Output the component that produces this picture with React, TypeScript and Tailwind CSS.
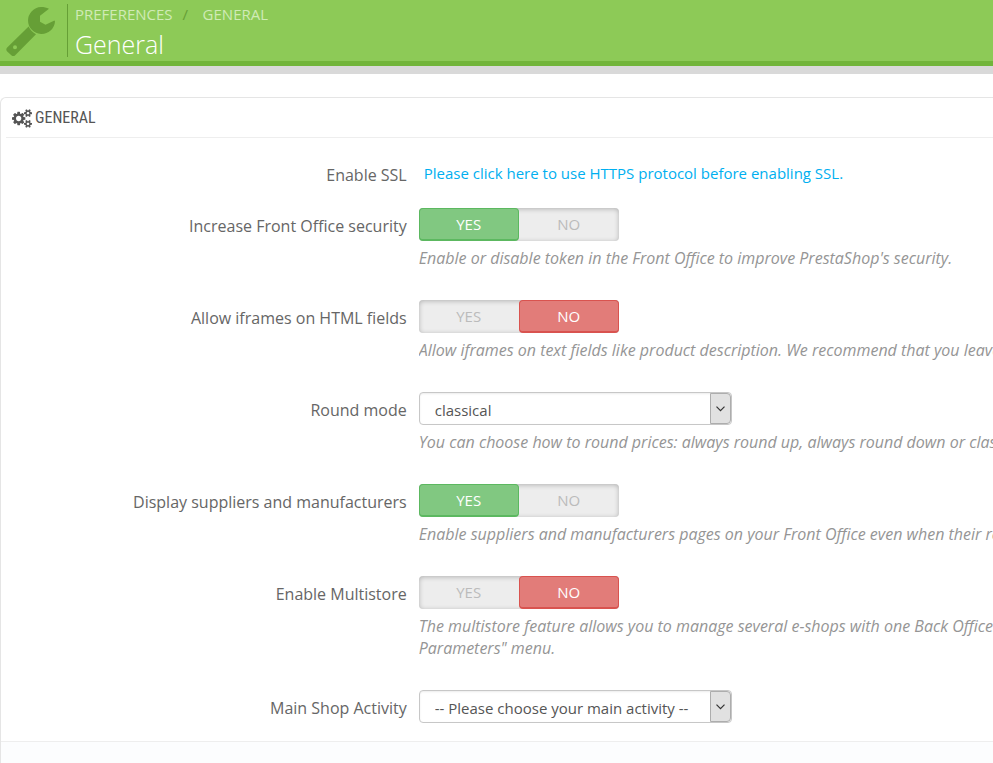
import React from "react";

type FieldProps = {
  id: string;
  label: string;
  help: string[];
  children: React.ReactNode;
};

function Field({ id, label, help, children }: FieldProps) {
  return (
    <div className="flex gap-3">
      <div
        id={`${id}-label`}
        className="w-[calc(41%-1px)] shrink-0 pt-1.5 text-right text-base leading-6 text-[#666]"
      >
        <label htmlFor={id}>{label}</label>
      </div>
      <div className="min-w-0 flex-1">
        {children}
        {help.length > 0 && (
          <p className="mt-1.5 overflow-hidden whitespace-nowrap text-base leading-[22px] italic text-[#959595]">
            {help.map((line) => (
              <span key={line} className="block">
                {line}
              </span>
            ))}
          </p>
        )}
      </div>
    </div>
  );
}

type SwitchProps = { id: string; on: boolean };

function Switch({ id, on }: SwitchProps) {
  return (
    <div
      role="radiogroup"
      aria-labelledby={`${id}-label`}
      className="flex h-[33px] w-[200px] rounded bg-[#ededed] text-[15px] uppercase text-[#bbb] shadow-[inset_0_1px_5px_rgba(0,0,0,0.25)]"
    >
      <label className="flex flex-1 items-center justify-center rounded border border-transparent has-checked:border-b-2 has-checked:border-[#5cb860] has-checked:bg-[#81c881] has-checked:text-white">
        <input
          id={id}
          type="radio"
          name={id}
          value="1"
          defaultChecked={on}
          className="sr-only"
        />
        Yes
      </label>
      <label className="flex flex-1 items-center justify-center rounded border border-transparent has-checked:border-b-2 has-checked:border-[#d9534f] has-checked:bg-[#e27c79] has-checked:text-white">
        <input
          type="radio"
          name={id}
          value="0"
          defaultChecked={!on}
          className="sr-only"
        />
        No
      </label>
    </div>
  );
}

type SelectProps = { id: string; option: string };

function Select({ id, option }: SelectProps) {
  return (
    <div className="relative h-[33px] w-[313px]">
      <select
        id={id}
        className="h-full w-full appearance-none rounded border border-[#c7c7c7] bg-white pt-1 pl-[15px] text-[15px] text-[#555] shadow-[inset_0_1px_2px_rgba(0,0,0,0.08)]"
      >
        <option>{option}</option>
      </select>
      <span className="pointer-events-none absolute inset-y-px right-px flex w-[21px] items-center justify-center rounded-r-sm border border-[#adadad] bg-[#e1e1e1]">
        <svg
          width="9"
          height="6"
          viewBox="0 0 9 6"
          fill="none"
          stroke="#333"
          strokeWidth="1.2"
        >
          <path d="M0.5 0.7 4.5 4.7 8.5 0.7" />
        </svg>
      </span>
    </div>
  );
}

function Wrench() {
  return (
    <svg width="50" height="50" viewBox="0 0 50 50" fill="#669f36">
      <path d="M43 1.8C40.600 .6 38 0 35 0A13.500 13.500 0 1 0 49 14.500L48.500 13.600 39.500 17.700 34 14.800V8.800Z" />
      <path
        d="M22.600 19.600 1.200 40.600Q-.6 42.600 1.200 44.500L5.600 48.400Q7.400 49.800 9.200 48.200L30 27.200Q25.200 25 22.600 19.600ZM9 38.200A2 2 0 1 1 9 42.200 2 2 0 1 1 9 38.200Z"
        fillRule="evenodd"
      />
    </svg>
  );
}

const smallCog =
  "M1664 1408q0-52-38-90t-90-38-90 38-38 90q0 53 37.500 90.500t90.500 37.500 90.500-37.500 37.500-90.500zM1920 1338v140q0 16-149 31-12 27-30 52 51 113 51 138 0 4-4 7-122 71-124 71-8 0-46-47t-52-68q-20 2-30 2t-30-2q-14 21-52 68t-46 47q-2 0-124-71-4-3-4-7 0-25 51-138-18-25-30-52-149-15-149-31v-140q0-16 149-31 13-29 30-52-51-113-51-138 0-4 4-7 4-2 35-20t59-34 30-16q8 0 46 46.500t52 67.500q20-2 30-2t30 2q51-71 92-112l6-2q4 0 124 70 4 3 4 7 0 25-51 138 17 23 30 52 149 15 149 31z";

function Cogs() {
  return (
    <svg
      width="20"
      height="19"
      viewBox="0 0 1920 1792"
      fill="currentColor"
      fillRule="evenodd"
    >
      <path d="M896 896q0-106-75-181t-181-75-181 75-75 181 75 181 181 75 181-75 75-181zM1280 805v185q0 10-7 19.500t-16 10.500l-155 24q-11 35-32 76 34 48 90 115 7 11 7 20 0 12-7 19-23 30-82.500 89.500t-78.500 59.500q-11 0-21-7l-115-90q-37 19-77 31-11 108-23 155-7 24-30 24h-186q-11 0-20-7.500t-10-17.500l-23-153q-34-10-75-31l-118 89q-7 7-20 7-11 0-21-8-144-133-144-160 0-9 7-19 10-14 41-53t47-61q-23-44-35-82l-152-24q-10-1-17-9.500t-7-19.500v-185q0-10 7-19.500t16-10.500l155-24q11-35 32-76-34-48-90-115-7-11-7-20 0-12 7-20 22-30 82-89t79-59q11 0 21 7l115 90q34-18 77-32 11-108 23-154 7-24 30-24h186q11 0 20 7.500t10 17.500l23 153q34 10 75 31l118-89q8-7 20-7 11 0 21 8 144 133 144 160 0 8-7 19-12 16-42 54t-45 60q23 48 34 82l152 23q10 2 17 10.500t7 19.500z" />
      <path d={smallCog} />
      <path d={smallCog} transform="translate(0 -1024)" />
    </svg>
  );
}

function App() {
  return (
    <div className="flex min-h-screen flex-col overflow-hidden bg-white font-['Open_Sans','Noto_Sans',sans-serif]">
      <header className="flex border-b-[5px] border-[#72b53a] bg-[#8dca57] pl-1.5">
        <div className="my-1 flex w-[62px] shrink-0 items-end border-r border-[#669f36]">
          <Wrench />
        </div>
        <div className="pt-[3px] pb-px pl-[7px]">
          <nav className="flex text-[15px] leading-[22px] uppercase text-[#d0ebb6]">
            <a href="#preferences">Preferences</a>
            <span className="w-[30px] pl-2.5 text-[#669f36]">/</span>
            <a href="#general">General</a>
          </nav>
          <h1 className="mt-[3px] text-[25px] leading-8 font-light text-white">
            General
          </h1>
        </div>
      </header>
      <div className="h-2 bg-[#d9d9d9]" />

      <main className="mt-[23px] flex flex-1 flex-col rounded-tl-md border-t border-l border-[#e5e5e5]">
        <h2 className="ml-[5px] flex h-10 items-center gap-[3px] border-b border-[#eee] pt-px pl-1.5 font-['Ubuntu_Condensed','Roboto_Condensed','Open_Sans_Condensed','Open_Sans',sans-serif] text-base uppercase text-[#555]">
          <Cogs />
          General
        </h2>

        <form className="flex flex-col gap-[31px] pt-6 pb-[18px]">
          <div className="-mb-2.5 flex gap-3">
            <span className="w-[calc(41%-1px)] shrink-0 pt-px text-right text-base leading-6 text-[#666]">
              Enable SSL
            </span>
            <a
              href="#ssl"
              className="pl-[5px] text-[15px] leading-[22px] text-[#00aff0]"
            >
              Please click here to use HTTPS protocol before enabling SSL.
            </a>
          </div>
          <Field
            id="token"
            label="Increase Front Office security"
            help={[
              "Enable or disable token in the Front Office to improve PrestaShop's security.",
            ]}
          >
            <Switch id="token" on={true} />
          </Field>
          <Field
            id="iframes"
            label="Allow iframes on HTML fields"
            help={[
              "Allow iframes on text fields like product description. We recommend that you leave",
            ]}
          >
            <Switch id="iframes" on={false} />
          </Field>
          <Field
            id="round"
            label="Round mode"
            help={[
              "You can choose how to round prices: always round up, always round down or classic",
            ]}
          >
            <Select id="round" option="classical" />
          </Field>
          <Field
            id="suppliers"
            label="Display suppliers and manufacturers"
            help={[
              "Enable suppliers and manufacturers pages on your Front Office even when their re",
            ]}
          >
            <Switch id="suppliers" on={true} />
          </Field>
          <Field
            id="multistore"
            label="Enable Multistore"
            help={[
              "The multistore feature allows you to manage several e-shops with one Back Office.",
              'Parameters" menu.',
            ]}
          >
            <Switch id="multistore" on={false} />
          </Field>
          <Field id="activity" label="Main Shop Activity" help={[]}>
            <Select
              id="activity"
              option="-- Please choose your main activity --"
            />
          </Field>
        </form>

        <footer className="flex-1 border-t border-[#eee] bg-[#fcfdfe]" />
      </main>
    </div>
  );
}

export default App;
